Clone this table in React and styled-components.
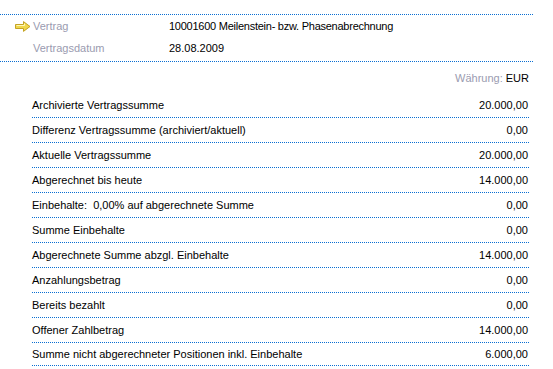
import React from "react";
import styled, { createGlobalStyle } from "styled-components";

const Global = createGlobalStyle`
  html, body { margin: 0; padding: 0; background: #ffffff; }
  body { font-family: "Liberation Sans", Arial, sans-serif; font-size: 11px; color: #000; }
`;

const Page = styled.div`
  width: 553px;
  height: 369px;
  overflow: hidden;
  padding-top: 14px;
  box-sizing: border-box;
`;

const Header = styled.div`
  width: 533px;
  border-top: 1px dotted #0a6fd2;
  border-bottom: 1px dotted #0a6fd2;
  padding-bottom: 2px;
`;

const HeaderRow = styled.div`
  display: grid;
  grid-template-columns: 15px 18px 136px 1fr;
  align-items: center;
  height: 22px;
`;

const HeadLabel = styled.span`
  color: #9a9bb0;
`;

const HeadValue = styled.span`
  color: #000;
  letter-spacing: ${(p) => (p.$tight ? "-0.25px" : "0")};
`;

const Arrow = () => (
  <svg width="16" height="11" viewBox="0 0 16 11">
    <path
      d="M0.5 3.5 H8.5 V0.6 L15 5.5 L8.5 10.4 V7.5 H0.5 Z"
      fill="#f0d84c"
      stroke="#c4a326"
      strokeWidth="1"
      strokeLinejoin="round"
    />
    <path d="M1.5 4.5 H9.5 V2.6" fill="none" stroke="#fff7b8" strokeWidth="1" />
  </svg>
);

const Currency = styled.div`
  width: 529px;
  display: flex;
  justify-content: flex-end;
  align-items: center;
  height: 30px;
  padding-top: 1px;
`;

const CurrencyLabel = styled.span`
  color: #9a9bb0;
  margin-right: 3px;
`;

const List = styled.div`
  margin-left: 32px;
  width: 497px;
`;

const Row = styled.div`
  display: flex;
  justify-content: space-between;
  align-items: center;
  height: ${(p) => (p.$last ? 22 : 24)}px;
  border-bottom: 1px dotted #0a6fd2;
`;

const Label = styled.span`
  white-space: pre;
`;

const Value = styled.span`
  text-align: right;
  padding-right: 1px;
`;

const rows = [
  ["Archivierte Vertragssumme", "20.000,00"],
  ["Differenz Vertragssumme (archiviert/aktuell)", "0,00"],
  ["Aktuelle Vertragssumme", "20.000,00"],
  ["Abgerechnet bis heute", "14.000,00"],
  ["Einbehalte:  0,00% auf abgerechnete Summe", "0,00"],
  ["Summe Einbehalte", "0,00"],
  ["Abgerechnete Summe abzgl. Einbehalte", "14.000,00"],
  ["Anzahlungsbetrag", "0,00"],
  ["Bereits bezahlt", "0,00"],
  ["Offener Zahlbetrag", "14.000,00"],
  ["Summe nicht abgerechneter Positionen inkl. Einbehalte", "6.000,00"],
];

export default function App() {
  return (
    <Page>
      <Global />
      <Header>
        <HeaderRow>
          <span />
          <Arrow />
          <HeadLabel>Vertrag</HeadLabel>
          <HeadValue $tight>10001600 Meilenstein- bzw. Phasenabrechnung</HeadValue>
        </HeaderRow>
        <HeaderRow>
          <span />
          <span />
          <HeadLabel>Vertragsdatum</HeadLabel>
          <HeadValue>28.08.2009</HeadValue>
        </HeaderRow>
      </Header>
      <Currency>
        <CurrencyLabel>Währung:</CurrencyLabel>
        <span>EUR</span>
      </Currency>
      <List>
        {rows.map(([l, v], i) => (
          <Row key={l} $last={i === rows.length - 1}>
            <Label>{l}</Label>
            <Value>{v}</Value>
          </Row>
        ))}
      </List>
    </Page>
  );
}
